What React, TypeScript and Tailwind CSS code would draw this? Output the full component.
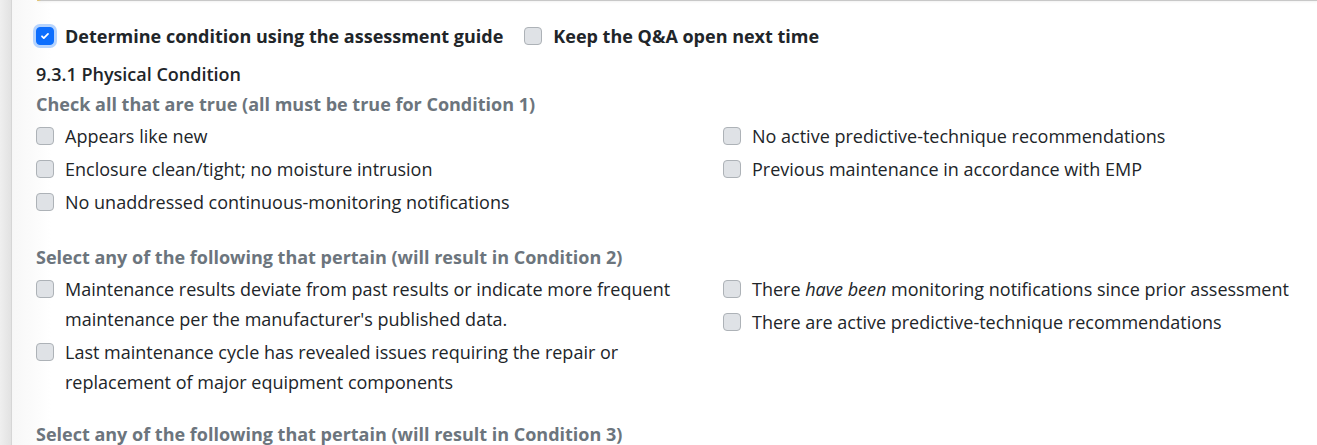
import { useState } from "react";

type Item = { id: string; label: React.ReactNode };

const trueItemsLeft: Item[] = [
  { id: "new", label: "Appears like new" },
  { id: "enclosure", label: "Enclosure clean/tight; no moisture intrusion" },
  { id: "monitoring", label: "No unaddressed continuous-monitoring notifications" },
];

const trueItemsRight: Item[] = [
  { id: "predictive", label: "No active predictive-technique recommendations" },
  { id: "emp", label: "Previous maintenance in accordance with EMP" },
];

const cond2Left: Item[] = [
  {
    id: "deviate",
    label:
      "Maintenance results deviate from past results or indicate more frequent maintenance per the manufacturer's published data.",
  },
  {
    id: "issues",
    label:
      "Last maintenance cycle has revealed issues requiring the repair or replacement of major equipment components",
  },
];

const cond2Right: Item[] = [
  {
    id: "notif",
    label: (
      <>
        There <em>have been</em> monitoring notifications since prior assessment
      </>
    ),
  },
  { id: "active", label: "There are active predictive-technique recommendations" },
];

function Box({ checked, onClick }: { checked: boolean; onClick: () => void }) {
  return (
    <button
      type="button"
      onClick={onClick}
      className={`mt-[6px] grid size-[18px] shrink-0 place-items-center rounded-[4px] border ${
        checked
          ? "border-[#0d6efd] bg-[#0d6efd] shadow-[0_0_0_3px_#b6d4fe]"
          : "border-[#adb2b7] bg-[#dfe2e6]"
      }`}
    >
      {checked ? (
        <svg viewBox="0 0 20 20" className="size-[12px]" fill="none">
          <path d="M5 10.5l3 3 7-7" stroke="#fff" strokeWidth="3" strokeLinecap="round" strokeLinejoin="round" />
        </svg>
      ) : null}
    </button>
  );
}

function CheckRow({ item, checks, toggle }: { item: Item; checks: Record<string, boolean>; toggle: (id: string) => void }) {
  return (
    <label className="flex gap-[11px] leading-[30px]">
      <Box checked={!!checks[item.id]} onClick={() => toggle(item.id)} />
      <span>{item.label}</span>
    </label>
  );
}

function Columns({
  left,
  right,
  checks,
  toggle,
}: {
  left: Item[];
  right: Item[];
  checks: Record<string, boolean>;
  toggle: (id: string) => void;
}) {
  return (
    <div className="grid grid-cols-[687px_1fr]">
      <div className="flex flex-col gap-[3px] pr-[40px]">
        {left.map((item) => (
          <CheckRow key={item.id} item={item} checks={checks} toggle={toggle} />
        ))}
      </div>
      <div className="flex flex-col gap-[3px]">
        {right.map((item) => (
          <CheckRow key={item.id} item={item} checks={checks} toggle={toggle} />
        ))}
      </div>
    </div>
  );
}

export default function App() {
  const [checks, setChecks] = useState<Record<string, boolean>>({ guide: true });
  const toggle = (id: string) => setChecks((c) => ({ ...c, [id]: !c[id] }));

  return (
    <div className="flex h-[445px] overflow-hidden bg-white text-[18px] text-[#212529] [font-family:'Open_Sans',sans-serif]">
      <div className="w-[12px] shrink-0 border-r border-[#d6d6d6] bg-gradient-to-r from-[#efefef] to-[#e2e2e2]" />
      <div className="flex min-w-0 flex-1 flex-col bg-gradient-to-r from-[#f7f7f7] via-white via-[3%] to-white">
        <div className="ml-[25px] h-[3px] rounded-bl-[4px] border-b border-l-[4px] border-b-[#c8c8c8] border-l-[#f0c040] shadow-[0_1px_2px_rgba(0,0,0,0.08)]" />
        <div className="pl-[24px]">
          <div className="mt-[20px] flex items-start gap-[21px] font-bold">
            <label className="flex gap-[11px] leading-[30px]">
              <Box checked={!!checks.guide} onClick={() => toggle("guide")} />
              <span>Determine condition using the assessment guide</span>
            </label>
            <label className="flex gap-[11px] leading-[30px]">
              <Box checked={!!checks.keep} onClick={() => toggle("keep")} />
              <span>Keep the Q&amp;A open next time</span>
            </label>
          </div>

          <h3 className="mt-[8px] font-semibold leading-[30px]">9.3.1 Physical Condition</h3>
          <p className="font-bold leading-[30px] text-[#6c757d]">Check all that are true (all must be true for Condition 1)</p>
          <div className="mt-[2px]">
            <Columns left={trueItemsLeft} right={trueItemsRight} checks={checks} toggle={toggle} />
          </div>

          <p className="mt-[25px] font-bold leading-[30px] text-[#6c757d]">
            Select any of the following that pertain (will result in Condition 2)
          </p>
          <div className="mt-[2px]">
            <Columns left={cond2Left} right={cond2Right} checks={checks} toggle={toggle} />
          </div>

          <p className="mt-[22px] font-bold leading-[30px] text-[#6c757d]">
            Select any of the following that pertain (will result in Condition 3)
          </p>
        </div>
      </div>
    </div>
  );
}
